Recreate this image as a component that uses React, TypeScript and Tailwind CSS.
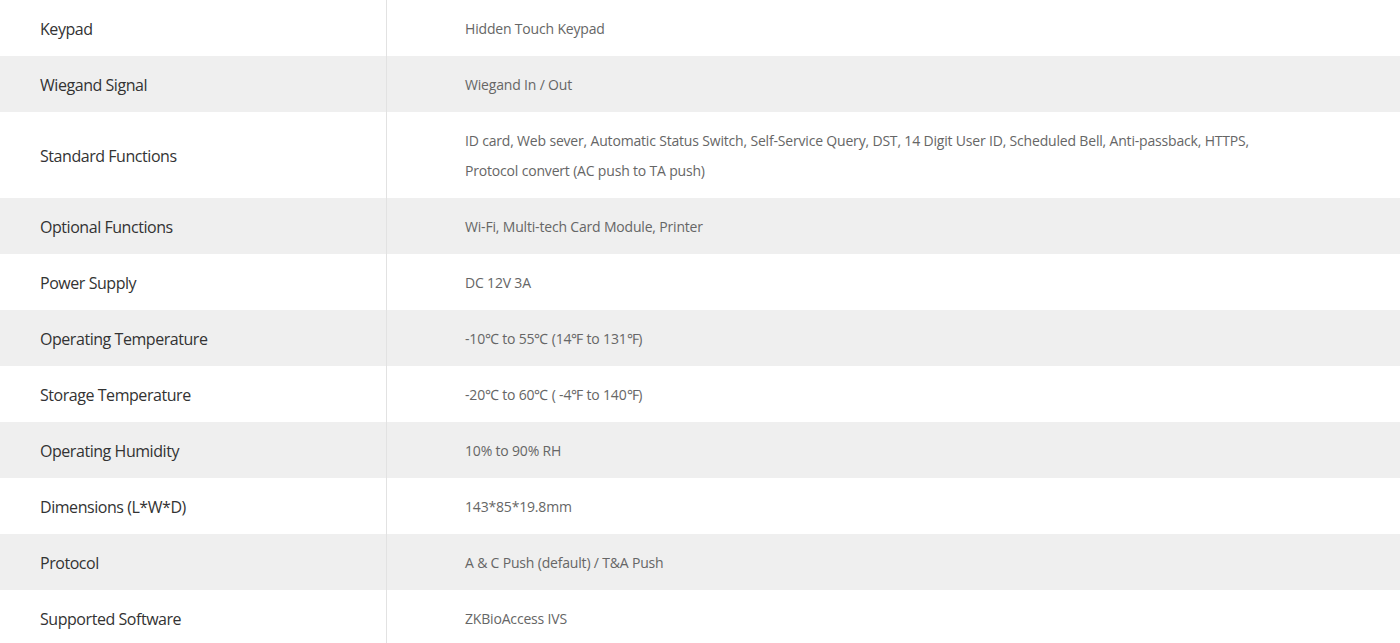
const rows: Array<{ label: string; value: string[] }> = [
  { label: 'Keypad', value: ['Hidden Touch Keypad'] },
  { label: 'Wiegand Signal', value: ['Wiegand In / Out'] },
  {
    label: 'Standard Functions',
    value: [
      'ID card, Web sever, Automatic Status Switch, Self-Service Query, DST, 14 Digit User ID, Scheduled Bell, Anti-passback, HTTPS,',
      'Protocol convert (AC push to TA push)',
    ],
  },
  { label: 'Optional Functions', value: ['Wi-Fi, Multi-tech Card Module, Printer'] },
  { label: 'Power Supply', value: ['DC 12V 3A'] },
  { label: 'Operating Temperature', value: ['-10℃ to 55℃ (14℉ to 131℉)'] },
  { label: 'Storage Temperature', value: ['-20℃ to 60℃ ( -4℉ to 140℉)'] },
  { label: 'Operating Humidity', value: ['10% to 90% RH'] },
  { label: 'Dimensions (L*W*D)', value: ['143*85*19.8mm'] },
  { label: 'Protocol', value: ['A & C Push (default) / T&A Push'] },
  { label: 'Supported Software', value: ['ZKBioAccess IVS'] },
]

export default function App() {
  return (
    <div className="w-[1400px] bg-white font-['Open_Sans',sans-serif]">
      {rows.map((row, index) => (
        <div
          key={row.label}
          className={`flex ${index % 2 === 1 ? 'bg-[#efefef]' : 'bg-white'}`}
        >
          <div className="flex w-[387px] shrink-0 items-center border-r border-[#e2e2e2] pl-[40px] pt-[2px] text-[16px] tracking-[-0.45px] text-[#333]">
            {row.label}
          </div>
          <div className="pb-[12px] pl-[78px] pt-[14px] text-[14px] leading-[30px] tracking-[-0.18px] text-[#666]">
            {row.value.map((line) => (
              <div key={line}>{line}</div>
            ))}
          </div>
        </div>
      ))}
    </div>
  )
}
